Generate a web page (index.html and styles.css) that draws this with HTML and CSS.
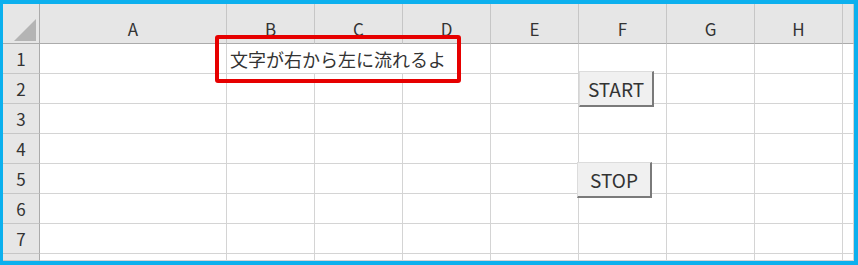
FILE: index.html
```html
<!DOCTYPE html>
<html lang="ja">
<head>
    <meta charset="UTF-8">
    <title>文字が右から左に流れるよ</title>
    <link rel="stylesheet" href="styles.css">
</head>
<body>
    <div class="frame">
        <div class="sheet">
            <!-- 列見出し -->
            <div class="corner">
                <svg width="22" height="22" viewBox="0 0 22 22"><polygon points="22 0, 22 22, 0 22" fill="#b4b4b4"/></svg>
            </div>
            <div class="col-head">A</div>
            <div class="col-head">B</div>
            <div class="col-head">C</div>
            <div class="col-head">D</div>
            <div class="col-head">E</div>
            <div class="col-head">F</div>
            <div class="col-head">G</div>
            <div class="col-head">H</div>
            <div class="col-head"></div>

            <!-- 1行目 -->
            <div class="row-head">1</div>
            <div class="cell"></div>
            <div class="cell wide">文字が右から左に流れるよ</div>
            <div class="cell"></div>
            <div class="cell"></div>
            <div class="cell"></div>
            <div class="cell"></div>
            <div class="cell"></div>

            <!-- 2行目 -->
            <div class="row-head">2</div>
            <div class="cell"></div><div class="cell"></div><div class="cell"></div>
            <div class="cell"></div><div class="cell"></div><div class="cell"></div>
            <div class="cell"></div><div class="cell"></div><div class="cell"></div>

            <!-- 3行目 -->
            <div class="row-head">3</div>
            <div class="cell"></div><div class="cell"></div><div class="cell"></div>
            <div class="cell"></div><div class="cell"></div><div class="cell"></div>
            <div class="cell"></div><div class="cell"></div><div class="cell"></div>

            <!-- 4行目 -->
            <div class="row-head">4</div>
            <div class="cell"></div><div class="cell"></div><div class="cell"></div>
            <div class="cell"></div><div class="cell"></div><div class="cell"></div>
            <div class="cell"></div><div class="cell"></div><div class="cell"></div>

            <!-- 5行目 -->
            <div class="row-head">5</div>
            <div class="cell"></div><div class="cell"></div><div class="cell"></div>
            <div class="cell"></div><div class="cell"></div><div class="cell"></div>
            <div class="cell"></div><div class="cell"></div><div class="cell"></div>

            <!-- 6行目 -->
            <div class="row-head">6</div>
            <div class="cell"></div><div class="cell"></div><div class="cell"></div>
            <div class="cell"></div><div class="cell"></div><div class="cell"></div>
            <div class="cell"></div><div class="cell"></div><div class="cell"></div>

            <!-- 7行目 -->
            <div class="row-head">7</div>
            <div class="cell"></div><div class="cell"></div><div class="cell"></div>
            <div class="cell"></div><div class="cell"></div><div class="cell"></div>
            <div class="cell"></div><div class="cell"></div><div class="cell"></div>

            <!-- 8行目（見切れ） -->
            <div class="row-head"></div>
            <div class="cell"></div><div class="cell"></div><div class="cell"></div>
            <div class="cell"></div><div class="cell"></div><div class="cell"></div>
            <div class="cell"></div><div class="cell"></div><div class="cell"></div>
        </div>

        <!-- シート上の図形 -->
        <div class="highlight"></div>
        <div class="sheet-button start">START</div>
        <div class="sheet-button stop">STOP</div>
    </div>
</body>
</html>
```

FILE: styles.css
```css
* {
    margin: 0;
    padding: 0;
    box-sizing: border-box;
}

body {
    font-family: 'Noto Sans CJK JP', 'Noto Sans', sans-serif;
    background: #ffffff;
    color: #333;
    width: 858px;
    height: 265px;
    overflow: hidden;
}

.frame {
    position: relative;
    width: 858px;
    height: 265px;
    border: 4px solid #0cb0ee;
    border-left-width: 3px;
    background: #ffffff;
    overflow: hidden;
}

.sheet {
    display: grid;
    grid-template-columns: 37px 187px repeat(7, 88px) 1fr;
    grid-template-rows: 40px repeat(7, 30px) 1fr;
    height: 100%;
}

.corner {
    background: #e6e6e6;
    border-right: 1px solid #ababab;
    border-bottom: 1px solid #ababab;
    display: flex;
    align-items: flex-end;
    justify-content: flex-end;
    padding: 0 3px 2px 0;
}

.corner svg {
    display: block;
}

.col-head {
    background: #e6e6e6;
    border-right: 1px solid #c6c6c6;
    border-bottom: 1px solid #ababab;
    display: flex;
    align-items: center;
    justify-content: center;
    font-size: 17px;
    padding-top: 9px;
    color: #333;
}

.row-head {
    background: #e6e6e6;
    border-right: 1px solid #ababab;
    border-bottom: 1px solid #c6c6c6;
    display: flex;
    align-items: center;
    justify-content: center;
    font-size: 17px;
    color: #333;
}

.cell {
    border-right: 1px solid #d4d4d4;
    border-bottom: 1px solid #d4d4d4;
}

.wide {
    grid-column: span 3;
    font-size: 18px;
    line-height: 30px;
    padding-left: 3px;
    white-space: nowrap;
    color: #333;
}

.highlight {
    position: absolute;
    left: 212px;
    top: 31px;
    width: 246px;
    height: 48px;
    border: 4px solid #e60000;
    border-radius: 3px;
}

.sheet-button {
    position: absolute;
    width: 75px;
    height: 36px;
    background: #f0f0f0;
    border: 1px solid #dcdcdc;
    border-right: 2px solid #7a7a7a;
    border-bottom: 2px solid #7a7a7a;
    display: flex;
    align-items: center;
    justify-content: center;
    font-size: 19px;
    color: #333;
}

.start {
    left: 576px;
    top: 67px;
}

.stop {
    left: 574px;
    top: 158px;
}
```
